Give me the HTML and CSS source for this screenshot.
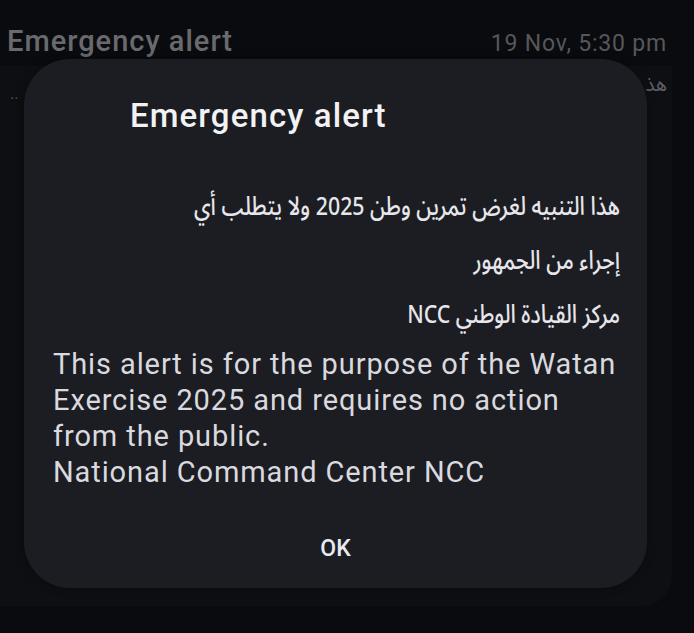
FILE: index.html
```html
<!DOCTYPE html>
<html lang="en">
<head>
<meta charset="utf-8">
<link rel="stylesheet" href="styles.css">
</head>
<body>
<div class="screen">
  <div class="list-head">
    <span class="list-title">Emergency alert</span>
    <span class="list-time">19 Nov, 5:30 pm</span>
  </div>
  <div class="list-card">
    <div class="preview">
      <span class="preview-dots">..</span>
      <span class="preview-ar" dir="rtl">هذ</span>
    </div>
  </div>

  <div class="dialog" role="dialog">
    <h1 class="dialog-title">Emergency alert</h1>
    <div class="dialog-body">
      <p class="ar" dir="rtl">هذا التنبيه لغرض تمرين وطن 2025 ولا يتطلب أي<br>إجراء من الجمهور<br>مركز القيادة الوطني NCC</p>
      <p class="en">This alert is for the purpose of the Watan Exercise 2025 and requires no action from the public.<br>National Command Center NCC</p>
    </div>
    <div class="dialog-actions">
      <button class="ok-btn" type="button">OK</button>
    </div>
  </div>
</div>
</body>
</html>
```

FILE: styles.css
```css
* { box-sizing: border-box; }
html, body {
  margin: 0;
  padding: 0;
  background: #0a0b0e;
}
.screen {
  position: relative;
  width: 694px;
  height: 633px;
  overflow: hidden;
  font-family: Roboto, "Noto Sans", sans-serif;
}
.list-head {
  display: flex;
  justify-content: space-between;
  align-items: baseline;
  padding: 24px 27px 0 7px;
  height: 66px;
}
.list-title {
  font-size: 29px;
  font-weight: 500;
  color: #6a6a6e;
  letter-spacing: 1px;
}
.list-time {
  font-size: 23px;
  color: #56575b;
  letter-spacing: 0.8px;
}
.list-card {
  margin: 0 22px 0 0;
  height: 540px;
  background: #0e0f13;
  border-radius: 0 0 30px 0;
}
.preview {
  display: flex;
  justify-content: space-between;
  align-items: flex-start;
  padding: 2px 5px 0 10px;
  height: 44px;
}
.preview-dots {
  color: #505156;
  font-size: 16px;
  line-height: 24px;
  padding-top: 14px;
}
.preview-ar {
  color: #5d5e62;
  font-size: 20px;
  line-height: 34px;
  font-family: "Noto Sans Arabic", "Noto Naskh Arabic", "DejaVu Sans", sans-serif;
}
.dialog {
  position: absolute;
  left: 24px;
  top: 59px;
  width: 623px;
  height: 529px;
  background: #1c1d22;
  border-radius: 46px;
  display: flex;
  flex-direction: column;
  box-shadow: 0 0 10px rgba(0,0,0,0.35);
}
.dialog-title {
  margin: 0;
  padding: 37px 0 0 106px;
  font-size: 33px;
  line-height: 40px;
  font-weight: 500;
  color: #f2f2f5;
  letter-spacing: 1.1px;
}
.dialog-body {
  padding: 44px 27px 0 29px;
  flex: 1;
}
.ar {
  margin: 0 0 4px;
  font-family: "Noto Sans Arabic", "Noto Naskh Arabic", "DejaVu Sans", sans-serif;
  font-size: 26px;
  font-weight: 500;
  line-height: 54px;
  color: #e6e6eb;
  text-align: right;
  transform: scaleX(0.82);
  transform-origin: right center;
}
.en {
  margin: 0;
  font-size: 29px;
  line-height: 36px;
  color: #d9d9df;
  letter-spacing: 0.9px;
}
.dialog-actions {
  display: flex;
  justify-content: center;
  padding-bottom: 18px;
}
.ok-btn {
  background: none;
  border: 0;
  font-family: Roboto, sans-serif;
  font-size: 23px;
  font-weight: 500;
  color: #e9e9f2;
  padding: 8px 20px;
}
```
